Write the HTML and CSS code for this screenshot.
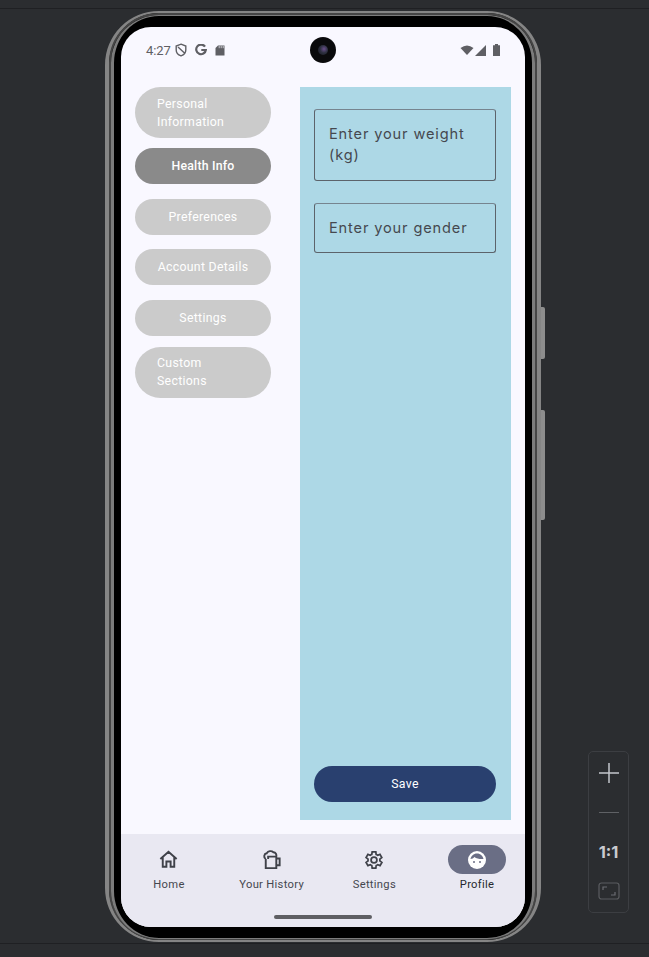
FILE: index.html
```html
<!DOCTYPE html>
<html lang="en">
<head>
<meta charset="utf-8">
<title>Profile</title>
<link rel="stylesheet" href="styles.css">
</head>
<body>
<div class="stage">
  <div class="phone">
    <span class="side-key key-power"></span>
    <span class="side-key key-volume"></span>
    <div class="screen">
      <div class="status">
        <span class="time">4:27</span>
        <svg class="st-icon" viewBox="0 0 12 14" width="12" height="14"><path d="M6 1.200 10.800 3v4c0 2.800-2 4.900-4.800 5.800C3.200 11.900 1.200 9.800 1.200 7V3z M3 4 9.500 10" fill="none" stroke="#5f5f64" stroke-width="1.400"/></svg>
        <svg class="st-icon st-g" viewBox="0 0 12 12" width="12" height="12"><path d="M10 2.700A4.800 4.800 0 1 0 10.800 6H6.300" fill="none" stroke="#5f5f64" stroke-width="2.200"/></svg>
        <svg class="st-icon st-sd" viewBox="0 0 10 11" width="10" height="11"><path d="M3 .5h6.500v10H.5V3z" fill="#5f5f64"/><path d="M4.200 1v2.200M6.200 1v2.200M8.200 1v2.200" stroke="#f9f8ff" stroke-width=".7"/></svg>
        <span class="camera"><span class="lens"></span></span>
        <span class="status-right">
          <svg viewBox="0 0 14 10" width="14" height="10"><path d="M0.500 3Q7-2 13.500 3L7 10z" fill="#5f5f64"/></svg>
          <svg viewBox="0 0 11 11" width="11" height="11"><path d="M11 0V11H0z" fill="#5f5f64"/></svg>
          <svg class="batt" viewBox="0 0 7 12" width="7" height="12"><path d="M2 0h3v1.200H7V12H0V1.200h2z" fill="#5f5f64"/></svg>
        </span>
      </div>
      <div class="content">
        <div class="sections">
          <button class="pill multi">Personal<br>Information</button>
          <button class="pill active">Health Info</button>
          <button class="pill">Preferences</button>
          <button class="pill">Account Details</button>
          <button class="pill">Settings</button>
          <button class="pill multi">Custom<br>Sections</button>
        </div>
        <div class="panel">
          <div class="fields">
            <div class="field">Enter your weight (kg)</div>
            <div class="field">Enter your gender</div>
          </div>
          <button class="save">Save</button>
        </div>
      </div>
      <nav class="nav">
        <div class="nav-item">
          <span class="nav-icon">
            <svg viewBox="0 0 24 24" width="23" height="23"><path d="M3.500 11.500 12 4l8.500 7.500M6 9.500V19.500h3.800V14h4.400v5.500H18V9.500" fill="none" stroke="#3f4149" stroke-width="2"/></svg>
          </span>
          <span class="nav-label">Home</span>
        </div>
        <div class="nav-item">
          <span class="nav-icon">
            <svg viewBox="0 0 24 24" width="23" height="23"><path d="M6 11.500C3.500 10 4 6 7 5.500 8.500 3 12 2.500 14 4.500c2.500.200 3.500 2.500 3 4.500H8.500L8.500 11.500M6 11.500V21h11V9M17 11h3.500v7H17" fill="none" stroke="#3f4149" stroke-width="2"/></svg>
          </span>
          <span class="nav-label">Your History</span>
        </div>
        <div class="nav-item">
          <span class="nav-icon">
            <svg viewBox="0 0 24 24" width="22" height="22"><path d="M19.400 13a7.600 7.600 0 0 0 0-2l2.100-1.600-2-3.500-2.500 1a7.500 7.500 0 0 0-1.700-1L15 3.200h-4l-.4 2.700a7.500 7.500 0 0 0-1.700 1l-2.500-1-2 3.500L6.500 11a7.600 7.600 0 0 0 0 2l-2.100 1.600 2 3.500 2.500-1a7.500 7.500 0 0 0 1.700 1l.4 2.700h4l.4-2.700a7.500 7.500 0 0 0 1.700-1l2.500 1 2-3.500z" transform="translate(-1 0)" fill="none" stroke="#3f4149" stroke-width="1.900"/><circle cx="12" cy="12" r="3.200" fill="none" stroke="#3f4149" stroke-width="1.900"/></svg>
          </span>
          <span class="nav-label">Settings</span>
        </div>
        <div class="nav-item">
          <span class="nav-icon selected">
            <svg viewBox="0 0 20 20" width="20" height="20"><circle cx="10" cy="10" r="9" fill="#fff"/><path d="M3.500 9C5 9 6.500 8.300 7.500 7c2 1.700 5.500 2.300 9 2C16 6 13.500 3.500 10 3.500 6.500 3.500 4 6 3.500 9z" fill="#6a6e85"/><circle cx="7" cy="12" r="1" fill="#6a6e85"/><circle cx="13" cy="12" r="1" fill="#6a6e85"/></svg>
          </span>
          <span class="nav-label nav-label-on">Profile</span>
        </div>
        <span class="home-bar"></span>
      </nav>
    </div>
  </div>
  <div class="zoom">
    <svg viewBox="0 0 22 22" width="22" height="22"><path d="M11 1V21M1 11H21" stroke="#c4c6cb" stroke-width="1.500"/></svg>
    <span class="zoom-minus"></span>
    <span class="zoom-one">1:1</span>
    <svg viewBox="0 0 22 18" width="22" height="18"><rect x="1" y="1" width="20" height="16" rx="2.500" fill="none" stroke="#5a5c60" stroke-width="1.200"/><path d="M5 8V5H9M17 10v3h-4" fill="none" stroke="#6b6d72" stroke-width="1.200"/></svg>
  </div>
</div>
</body>
</html>
```
FILE: styles.css
```css
* { box-sizing: border-box; }
html, body { margin: 0; padding: 0; }
body { background: #2b2d30; font-family: Roboto, "Liberation Sans", sans-serif; overflow: hidden; }
.stage {
  position: relative;
  width: 649px;
  height: 957px;
  padding: 11px 0 0 105px;
  background:
    linear-gradient(#1f2023, #1f2023) 0 8px / 100% 1px no-repeat,
    linear-gradient(#1f2023, #1f2023) 0 943px / 100% 1px no-repeat,
    #2b2d30;
}
.phone {
  position: relative;
  width: 436px;
  height: 931px;
  padding: 14px 12px 13px;
  background: #000;
  border-radius: 54px;
  border-style: solid;
  border-color: #858585;
  border-width: 2px 4px;
}
.phone::before {
  content: "";
  position: absolute;
  inset: 0;
  border: 2px solid #454545;
  border-radius: 50px;
}
.phone::after {
  content: "";
  position: absolute;
  inset: 2px 2px 1px;
  border-style: solid;
  border-color: #7c7c7c;
  border-width: 1px 3px;
  border-radius: 48px;
}
.side-key { position: absolute; right: -8px; width: 4px; background: #8d8d8d; border-radius: 0 2px 2px 0; }
.key-power { top: 294px; height: 52px; }
.key-volume { top: 397px; height: 110px; }
.screen {
  position: relative;
  z-index: 1;
  width: 404px;
  height: 900px;
  display: flex;
  flex-direction: column;
  background: #f9f8ff;
  border-radius: 30px;
  overflow: hidden;
}
.status {
  position: relative;
  flex: none;
  height: 60px;
  display: flex;
  align-items: center;
  padding: 0 25px 14px 25px;
  color: #5f5f64;
  font-size: 13px;
}
.time { letter-spacing: -0.1px; width: 29px; }
.st-g { margin-left: 8px; }
.st-sd { margin-left: 8px; }
.camera {
  position: absolute;
  left: 189px;
  top: 10px;
  width: 26px;
  height: 26px;
  border-radius: 50%;
  background: #0a0a0c;
  display: flex;
  align-items: center;
  justify-content: center;
}
.lens {
  width: 10px;
  height: 10px;
  border-radius: 50%;
  background: radial-gradient(circle at 60% 40%, #6a4e8c 0, #2d3040 45%, #15161c 100%);
}
.status-right { margin-left: auto; display: flex; align-items: center; gap: 1px; }
.batt { margin-left: 6px; }
.content { flex: 1; min-height: 0; display: flex; padding: 0 14px 14px; gap: 29px; }
.sections { width: 136px; flex: none; display: flex; flex-direction: column; gap: 10px; }
.pill {
  display: block;
  width: 136px;
  height: 36px;
  border: 0;
  border-radius: 18px;
  background: #cbcbcb;
  color: #fff;
  font: 450 12.300px/18px Roboto, sans-serif;
  letter-spacing: 0.3px;
  text-align: center;
  padding: 0;
}
.pill:not(.multi) + .pill:not(.multi) { margin-top: 4.500px; }
.pill + .pill.multi { margin-top: 1px; }
.pill.multi { height: 51px; border-radius: 26px; text-align: left; padding-left: 22px; }
.pill.active { background: #8a8a8a; font-weight: 500; letter-spacing: 0.2px; }
.panel {
  width: 211px;
  flex: none;
  background: #add8e6;
  padding: 22px 15px 18px 14px;
  display: flex;
  flex-direction: column;
  justify-content: space-between;
}
.fields { display: flex; flex-direction: column; gap: 22px; }
.field {
  border: 1px solid #5c636b;
  border-top-color: #76848f;
  border-radius: 3px;
  padding: 14px 14px 13.500px;
  color: #45484f;
  font: 400 14.600px/21px Inter, sans-serif;
  letter-spacing: 0.85px;
}
.save {
  height: 36px;
  border: 0;
  border-radius: 18px;
  background: #29406f;
  color: #fff;
  font: 450 12.300px Roboto, sans-serif;
  letter-spacing: 0.3px;
}
.nav {
  position: relative;
  flex: none;
  height: 93px;
  background: #e9e8f2;
  display: grid;
  grid-template-columns: repeat(4, 102.700px);
  justify-content: center;
  padding: 11px 0 0 0;
}
.nav-item { display: flex; flex-direction: column; align-items: center; gap: 3px; }
.nav-icon { width: 58px; height: 29px; border-radius: 15px; display: flex; align-items: center; justify-content: center; }
.nav-icon.selected { background: #6a6e85; }
.nav-label { font: 450 11.200px/16px Roboto, sans-serif; color: #45474f; letter-spacing: 0.3px; }
.nav-label-on { color: #26282f; }
.home-bar {
  position: absolute;
  left: 153px;
  bottom: 8px;
  width: 98px;
  height: 4px;
  border-radius: 2px;
  background: #5e5e63;
}
.zoom {
  position: absolute;
  left: 588px;
  top: 751px;
  width: 41px;
  height: 162px;
  border: 1px solid #3c3e42;
  border-radius: 5px;
  display: flex;
  flex-direction: column;
  align-items: center;
  padding-top: 10px;
}
.zoom-minus { width: 20px; height: 1px; background: #5f6165; margin-top: 28px; }
.zoom-one { margin-top: 29px; font: 700 16.500px/20px Inter, sans-serif; color: #c9cbcf; }
.zoom svg:last-child { margin-top: 20px; }
```
